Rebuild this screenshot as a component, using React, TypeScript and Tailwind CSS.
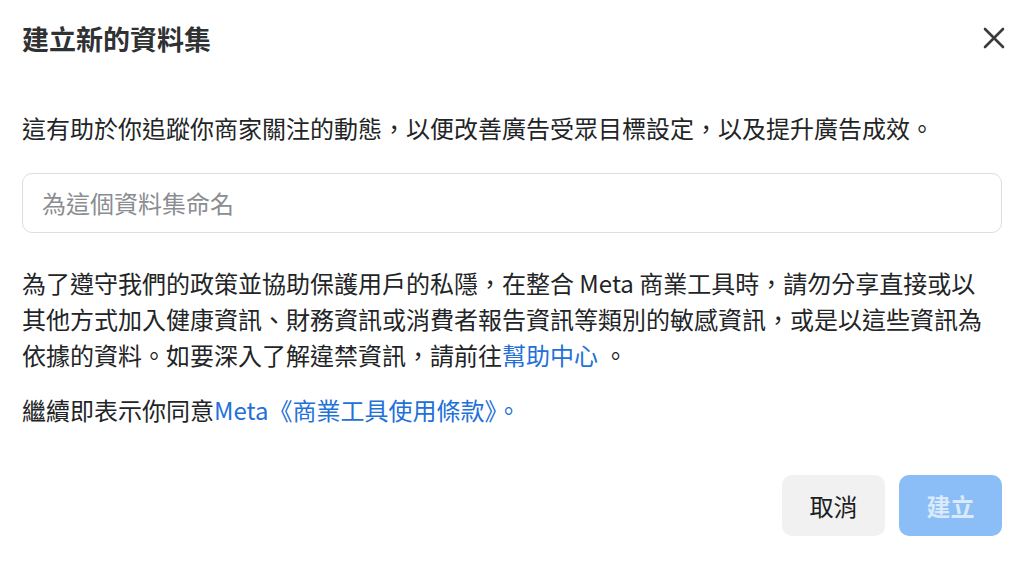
const font = "font-['Noto_Sans_CJK_TC','Noto_Sans',sans-serif]";

const CloseIcon = () => (
  <svg width="24" height="24" viewBox="0 0 24 24" fill="none">
    <path d="M3 3L21 21M21 3L3 21" stroke="#3a3b3c" strokeWidth="2.6" strokeLinecap="round" />
  </svg>
);

export default function App() {
  return (
    <div className={`w-[1024px] h-[562px] bg-white overflow-hidden px-[22px] text-[#1c1e21] ${font}`}>
      <div className="h-[76px] flex items-center justify-between">
        <h1 className="text-[27px] font-bold leading-none text-[#303133]">建立新的資料集</h1>
        <button className="w-[30px] h-[30px] flex items-center justify-center mr-[-7px]">
          <CloseIcon />
        </button>
      </div>

      <p className="mt-[34px] text-[24px] leading-[36px] text-[#222426]">
        這有助於你追蹤你商家關注的動態，以便改善廣告受眾目標設定，以及提升廣告成效。
      </p>

      <div className="mt-[27px] h-[60px] rounded-[10px] border border-[#dcdee1] flex items-center px-[19px]">
        <span className="text-[24px] text-[#8a8d91]">為這個資料集命名</span>
      </div>

      <p className="mt-[32px] text-[24px] leading-[36px] text-[#222426]">
        為了遵守我們的政策並協助保護用戶的私隱，在整合 Meta 商業工具時，請勿分享直接或以
        <br />
        其他方式加入健康資訊、財務資訊或消費者報告資訊等類別的敏感資訊，或是以這些資訊為
        <br />
        依據的資料。如要深入了解違禁資訊，請前往<span className="text-[#2270d8]">幫助中心</span> 。
      </p>

      <p className="mt-[19px] text-[24px] leading-[36px] text-[#222426]">
        繼續即表示你同意<span className="text-[#2270d8]">Meta《商業工具使用條款》。</span>
      </p>

      <div className="mt-[47px] flex justify-end gap-[14px]">
        <button className="w-[103px] h-[61px] rounded-[10px] bg-[#f1f1f1] text-[24px] text-[#1c1e21]">
          取消
        </button>
        <button className="w-[103px] h-[61px] rounded-[10px] bg-[#8bbdf6] text-[24px] font-bold text-[#d9eafd]">
          建立
        </button>
      </div>
    </div>
  );
}
